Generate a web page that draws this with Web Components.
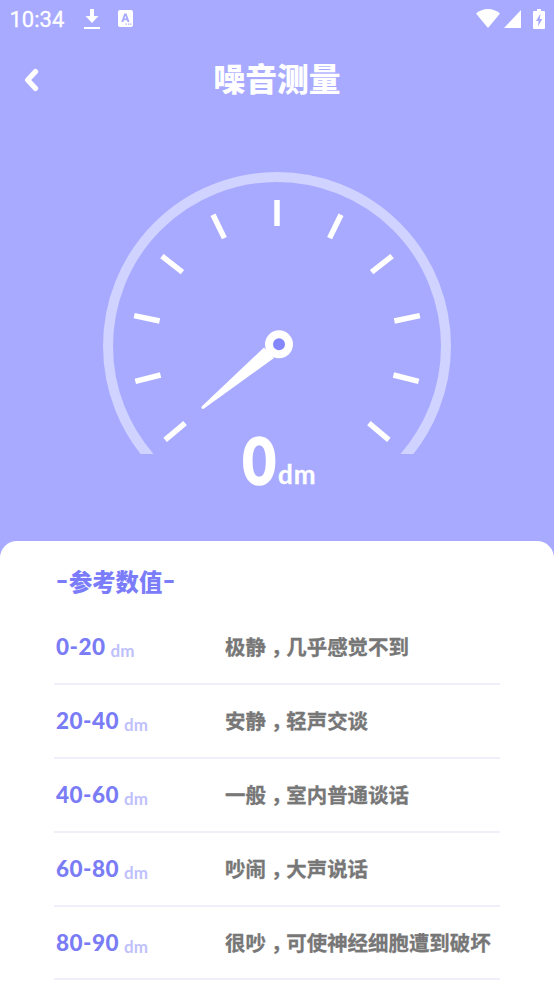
<!DOCTYPE html>
<html lang="zh-CN">
<head>
<meta charset="utf-8">
<title>噪音测量</title>
<style>
  body {
    margin: 0;
    background: #a8aaff;
    font-family: "Noto Sans CJK SC", sans-serif;
  }
</style>
</head>
<body>
<noise-app></noise-app>

<script>
(function() {
  function define(name, html) {
    const tmpl = document.createElement("template");
    tmpl.innerHTML = html;
    customElements.define(name, class extends HTMLElement {
      constructor() {
        super();
        this.attachShadow({mode: "open"}).appendChild(tmpl.content.cloneNode(true));
      }
    });
  }

  define("status-bar", `
    <style>
      :host {
        display: flex;
        align-items: center;
        height: 38px;
        padding: 0 9px 0 9.500px;
        box-sizing: border-box;
        color: #fff;
        font: 22px/38px Roboto, sans-serif;
      }
      svg { display: block; fill: #fff; }
      .time { width: 74.500px; padding-top: 1px; -webkit-text-stroke: .3px #fff; }
      .left { display: flex; align-items: center; gap: 18px; flex: 1; padding-bottom: 1px; }
      .right { display: flex; align-items: center; padding-bottom: 1px; }
      .signal { margin-left: 4px; }
      .battery { margin-left: 12px; }
    </style>
    <span class="time">10:34</span>
    <div class="left">
      <svg width="16" height="22" viewBox="0 0 16 22"><path d="M6 1h4v7h4.500L8 15 1.500 8H6zM0 19h16v2H0z"/></svg>
      <svg width="15" height="17" viewBox="0 0 15 17">
        <path fill-rule="evenodd" d="M2 0h11a2 2 0 0 1 2 2v13a2 2 0 0 1-2 2H2a2 2 0 0 1-2-2V2a2 2 0 0 1 2-2zM6.300 3.500 3.300 12h2l.6-1.800h3l.6 1.800h2L8.500 3.500zM7.400 5.700l.9 2.900H6.500zM7.500 13.500v1.200h1.300v-1.200zM10 13.500v1.200h1.300v-1.200zM12.200 13.500v1.200h1.300v-1.200z"/>
      </svg>
    </div>
    <div class="right">
      <svg width="24" height="19" viewBox="0 0 24 19"><path d="M0 4.500C3.500 1.500 7.500 0 12 0s8.500 1.500 12 4.500L12 19z"/></svg>
      <svg class="signal" width="17" height="18" viewBox="0 0 17 18"><path d="M17 0v18H0z"/></svg>
      <svg class="battery" width="12" height="20" viewBox="0 0 12 20">
        <path fill-rule="evenodd" d="M4 0h4v2h3a1 1 0 0 1 1 1v16a1 1 0 0 1-1 1H1a1 1 0 0 1-1-1V3a1 1 0 0 1 1-1h3zM7.500 4.500 3 12h2.500L5 17.500 9.300 10H6.800z"/>
      </svg>
    </div>
  `);

  define("title-bar", `
    <style>
      :host {
        display: grid;
        grid-template-columns: 64px 1fr 64px;
        align-items: center;
        height: 82px;
        color: #fff;
      }
      svg { display: block; margin: 1px 0 0 23px; }
      h1 {
        margin: 0;
        text-align: center;
        font-size: 31.800px;
        font-weight: 900;
        line-height: 78px;
        padding-bottom: 4px;
      }
    </style>
    <svg width="16" height="24" viewBox="0 0 16 24" fill="none" stroke="#fff" stroke-width="5.200" stroke-linecap="round" stroke-linejoin="round"><path d="M12.500 3.600 4.600 12l7.900 8.400"/></svg>
    <h1><slot></slot></h1>
  `);

  class NoiseGauge extends HTMLElement {
    constructor() {
      super();
      // 11 ticks, 26 degrees apart, from -130 to 130
      let ticks = "";
      for (let a = -130; a <= 130; a += 26) {
        ticks += `<path d="M174 28v26" transform="rotate(${a} 174 174)"/>`;
      }
      this.attachShadow({mode: "open"}).innerHTML = `
        <style>
          :host {
            display: flex;
            flex-direction: column;
            align-items: center;
            height: 421px;
            padding-top: 52px;
            box-sizing: border-box;
            color: #fff;
          }
          svg { display: block; }
          .reading {
            display: flex;
            align-items: baseline;
            gap: 2px;
            margin: -32.500px 0 0 2px;
            line-height: 76px;
            font-family: Lato, sans-serif;
            -webkit-text-stroke: 2.500px #fff;
          }
          .value {
            font-size: 63px;
            font-weight: 700;
            transform: scaleX(.9);
            transform-origin: right;
          }
          .unit {
            font-size: 26px;
            font-weight: 700;
            letter-spacing: 1px;
            -webkit-text-stroke-width: .3px;
          }
        </style>
        <svg width="348" height="282" viewBox="0 0 348 282">
          <circle cx="174" cy="174" r="169" fill="none" stroke="#d0d2ff" stroke-width="10"/>
          <g stroke="#fff" stroke-width="5.500">${ticks}</g>
          <path d="M161 175.500 98.700 234.500q-1 3 2 2.300L171 186z" fill="#fff"/>
          <circle cx="176" cy="172.300" r="10" fill="#8587fd" stroke="#fff" stroke-width="8"/>
        </svg>
        <div class="reading">
          <span class="value">${this.getAttribute("value")}</span>
          <span class="unit">${this.getAttribute("unit")}</span>
        </div>
      `;
    }
  }
  customElements.define("noise-gauge", NoiseGauge);

  define("reference-panel", `
    <style>
      :host {
        display: block;
        height: 443px;
        padding: 0 54px;
        box-sizing: border-box;
        overflow: hidden;
        background: #fff;
        border-radius: 17px 17px 0 0;
      }
      h2 {
        display: flex;
        align-items: center;
        gap: 1px;
        height: 70px;
        margin: 0 0 0 2px;
        padding: 10px 0 0;
        box-sizing: border-box;
        color: #7a7cfa;
        font-size: 23.300px;
        font-weight: 900;
        line-height: 60px;
      }
      h2::before, h2::after {
        content: "-";
        width: 12px;
        text-align: center;
        transform: translateY(-3px) scaleX(1.400);
      }
    </style>
    <h2><slot name="title"></slot></h2>
    <slot></slot>
  `);

  define("level-row", `
    <style>
      :host {
        display: grid;
        grid-template-columns: 169px 1fr;
        align-items: center;
        height: 73.900px;
        padding-left: 2px;
        box-sizing: border-box;
        border-bottom: 2px solid #efeffb;
        white-space: nowrap;
      }
      .range {
        display: flex;
        align-items: baseline;
        gap: 5px;
        font: 900 22.500px Lato, sans-serif;
        letter-spacing: .5px;
        color: #7a7cf5;
      }
      .unit {
        font-size: 17px;
        font-weight: 700;
        letter-spacing: 0;
        color: #bfc1fb;
        position: relative;
        top: 2px;
      }
      .note {
        -webkit-text-stroke: .3px #777;
        color: #777;
        font-size: 20.450px;
        font-weight: 700;
        padding-bottom: 1px;
      }
    </style>
    <div class="range"><slot name="range"></slot><span class="unit">dm</span></div>
    <div class="note"><slot></slot></div>
  `);

  define("noise-app", `
    <style>
      :host { display: block; width: 554px; height: 984px; overflow: hidden; }
      /* half-width comma, centred in a full-width cell */
      i {
        display: inline-block;
        width: 1em;
        text-align: center;
        font-style: normal;
        font-feature-settings: "halt";
      }
    </style>
    <status-bar></status-bar>
    <title-bar>噪音测量</title-bar>
    <noise-gauge value="0" unit="dm"></noise-gauge>
    <reference-panel>
      <span slot="title">参考数值</span>
      <level-row><span slot="range">0-20</span>极静<i>，</i>几乎感觉不到</level-row>
      <level-row><span slot="range">20-40</span>安静<i>，</i>轻声交谈</level-row>
      <level-row><span slot="range">40-60</span>一般<i>，</i>室内普通谈话</level-row>
      <level-row><span slot="range">60-80</span>吵闹<i>，</i>大声说话</level-row>
      <level-row><span slot="range">80-90</span>很吵<i>，</i>可使神经细胞遭到破坏</level-row>
    </reference-panel>
  `);
})();
</script>
</body>
</html>
